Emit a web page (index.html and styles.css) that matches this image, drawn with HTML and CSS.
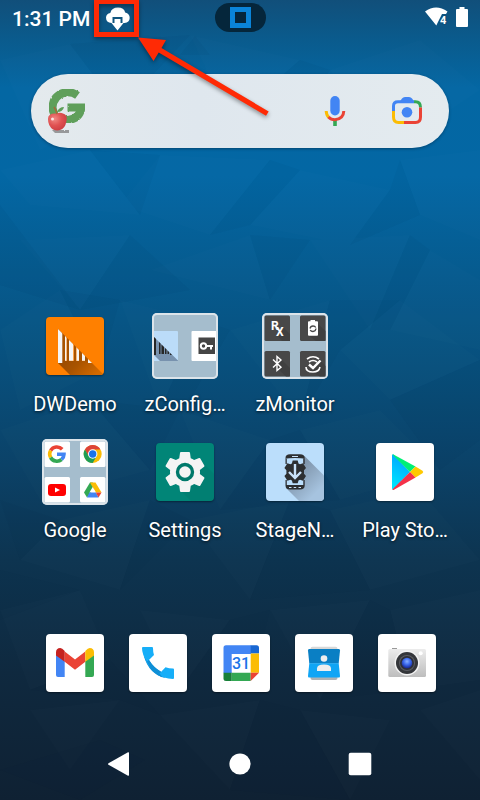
FILE: index.html
```html
<!DOCTYPE html>
<html lang="en">
<head>
<meta charset="utf-8">
<meta name="viewport" content="width=device-width, initial-scale=1">
<title>Home screen</title>
<link rel="stylesheet" href="styles.css">
</head>
<body>
<svg class="wallpaper" viewBox="0 0 480 800" preserveAspectRatio="none" aria-hidden="true">
  <g fill="#fff" fill-opacity=".01">
    <path d="M0 60L70 44L120 110L40 150ZM190 35L300 60L230 120ZM330 70L420 40L480 90L390 150ZM0 170L90 150L140 215L30 205ZM160 155L270 160L210 235L120 205ZM300 170L390 190L350 245L250 225ZM400 160L480 150V240L420 215ZM20 240L130 235L80 310ZM150 270L250 235L270 300ZM310 240L410 235L370 330ZM430 250L480 280V350L390 330Z"/>
    <path d="M0 330L60 290L100 370L20 410ZM120 300L200 320L160 410ZM230 330L330 300L300 420ZM340 350L400 300L480 360L390 400ZM0 430L90 400L150 470L40 500ZM180 410L270 440L220 510ZM300 430L380 410L440 470L340 500ZM60 520L150 500L120 590L20 560ZM190 520L290 500L250 600ZM330 510L420 490L480 560L370 590Z"/>
    <path d="M0 610L80 590L110 660L30 690ZM140 610L230 620L180 690ZM270 610L370 600L320 700ZM390 610L480 590V680L410 690ZM30 710L120 700L70 770ZM160 715L260 700L230 790ZM300 710L390 720L350 800ZM420 710L480 690V780Z"/>
  </g>
  <g fill="#001c38" fill-opacity=".035">
    <path d="M70 44L190 35L120 110ZM180 55L195 36L210 55ZM300 60L330 70L290 140L230 120ZM90 150L160 155L140 215ZM270 160L300 170L250 225L210 235ZM390 190L400 160L420 215L350 245ZM0 205L80 310L0 285ZM130 235L190 290L80 310ZM250 235L310 240L270 300ZM410 235L430 250L390 330L370 330Z"/>
    <path d="M60 290L120 300L100 370ZM200 320L230 330L190 400L160 410ZM330 300L400 300L340 350L300 420ZM390 400L480 360V440L440 470ZM90 400L180 410L150 470ZM270 440L300 430L340 500L220 510ZM0 500L60 520L20 560ZM150 500L190 520L120 590ZM290 500L330 510L370 590L250 600ZM0 570L80 590L0 620ZM230 620L270 610L250 690L180 690ZM370 600L390 610L410 690L320 700ZM110 660L160 715L120 700L30 690ZM260 700L300 710L350 800L230 790ZM100 740L145 760L80 800L0 770Z"/>
  </g>
</svg>

<header class="status">
  <div class="status-left">
    <time class="clock">1:31 PM</time>
    <svg class="icon-cloud" viewBox="0 0 24 24" role="img" aria-label="Download pending">
      <path fill="#fff" d="M5.500 16Q0 15.500 0 10.500Q.3 6.500 4.300 6Q5.500 .5 12 .5Q18 .5 19.200 5.500Q23.700 6.500 23.700 11Q23.500 15.500 18.500 16Z"/>
      <path fill="#10557f" d="M6.500 16.500V10H16.500V16.500Z"/>
      <path fill="#fff" d="M8.500 12H14.500V16H17.500L11.500 23.500L5.500 16H8.500Z"/>
    </svg>
  </div>
  <div class="pill"><span class="pill-mark"></span></div>
  <div class="status-right">
    <svg class="icon-wifi" viewBox="0 0 23 20" role="img" aria-label="Wi-Fi">
      <path fill="#fff" d="M0 4.500Q11 -3.500 22.500 4.500L21 7H17L13 15L11.300 18.500Z"/>
      <text class="wifi-band" x="15" y="17">4</text>
    </svg>
    <svg class="icon-battery" viewBox="0 0 12 20" role="img" aria-label="Battery">
      <path fill="#fff" d="M3.500 0H8.500V2H11Q12 2 12 3V19Q12 20 11 20H1Q0 20 0 19V3Q0 2 1 2H3.500Z"/>
    </svg>
  </div>
</header>

<main>
  <form class="search" role="search">
    <svg class="doodle" viewBox="0 0 42 48" aria-hidden="true">
      <defs>
        <filter id="rough" x="-10%" y="-10%" width="120%" height="120%">
          <feTurbulence type="fractalNoise" baseFrequency=".7" numOctaves="2" seed="4"/>
          <feDisplacementMap in="SourceGraphic" scale="2" xChannelSelector="R" yChannelSelector="G"/>
        </filter>
        <radialGradient id="apple" cx=".35" cy=".35" r=".75"><stop offset="0" stop-color="#f08a84"/><stop offset=".5" stop-color="#e05252"/><stop offset="1" stop-color="#c93b40"/></radialGradient>
      </defs>
      <path filter="url(#rough)" fill="none" stroke="#5e9f5a" stroke-width="8" d="M30.500 8.500Q25 4.500 18 5.500Q6 8.500 5.500 20.500Q6.500 33 21 33Q32.500 32 34.500 20.500H20.500"/>
      <g filter="url(#rough)" fill="#777" opacity=".7"><path d="M5 43H22V46H8Z"/></g>
      <path fill="url(#apple)" d="M9 26.500Q13 25 16 26.500Q21 28 19.500 34Q18 42 13 43Q10 44 6 42.500Q1 39 1 32Q1 26 9 26.500Z"/>
      <path fill="none" stroke="#a66a3a" stroke-width="1.500" d="M10 27Q9 23 7 20"/>
      <path fill="#5e9f5a" d="M10 25Q12 20 17 20Q16 25 10 25Z"/>
      <circle cx="5.500" cy="32" r="1.500" fill="#fff" opacity=".8"/>
    </svg>
    <input class="search-input" type="search" aria-label="Search">
    <button class="search-button" type="button" aria-label="Voice search">
      <svg viewBox="0 0 32 32">
        <rect x="11.300" y="1" width="9.400" height="19.500" rx="4.700" fill="#4285f4"/>
        <path fill="#34a853" d="M14.200 24h3.600v7h-3.600z"/>
        <g fill="none" stroke-width="3">
          <path stroke="#fbbc04" d="M7.200 16Q7.300 20 9.800 22.300"/>
          <path stroke="#ea4335" d="M9.500 22Q12 24.700 16 24.700Q24.500 24 24.800 16"/>
        </g>
      </svg>
    </button>
    <button class="search-button" type="button" aria-label="Search with camera">
      <svg viewBox="0 0 32 32">
        <g fill="none" stroke-width="3">
          <path stroke="#4285f4" d="M2.500 17V11Q2.500 6.800 7 6.800H23"/>
          <path stroke="#34a853" d="M23 6.800H24.500Q29.500 6.800 29.500 12.500"/>
          <path stroke="#ea4335" d="M29.500 12.500V22Q29.500 27.500 24.500 27.500H13"/>
          <path stroke="#fbbc04" d="M2.500 16V22Q2.500 27.500 7.500 27.500H13"/>
        </g>
        <path fill="#4285f4" d="M8.500 7L11 3.500Q12 2 14 2H18Q20 2 21 3.500L23.500 7Z"/>
        <circle cx="16" cy="17.200" r="5.300" fill="#4285f4"/>
      </svg>
    </button>
  </form>

  <nav class="apps" aria-label="Apps">
    <a class="app" href="#dwdemo">
      <span class="slot"><svg class="tile tile-orange" viewBox="0 0 58 58" aria-hidden="true">
        <defs><linearGradient id="dw" x1="12" y1="30" x2="46" y2="62" gradientUnits="userSpaceOnUse"><stop offset="0" stop-color="#8f4500"/><stop offset=".55" stop-color="#a85300"/><stop offset="1" stop-color="#d36a00"/></linearGradient>
        <clipPath id="dwc"><path d="M12 12L46 46H12Z"/></clipPath></defs>
        <path fill="url(#dw)" d="M12 12L58 58H24L12 46Z"/>
        <g clip-path="url(#dwc)"><path fill="#ff8000" d="M16 12H46V44H16Z"/><path fill="#a85300" d="M16 12h3v32h-3zM21 12h2v32h-2zM28 12h2v32h-2zM33 12h3v32h-3zM39 12h3v32h-3z"/>
        <path fill="#f5f5f5" d="M12 12h4.300v34.300H12zM19 12h1.500v31.700H19zM23 12h4.300v31.700H23zM30.500 12h2.500v31.700h-2.500zM36 12h3v31.700h-3zM42 12h4v34h-4z"/></g>
      </svg></span>
      <span class="label">DWDemo</span>
    </a>
    <a class="app" href="#zconfigure">
      <span class="slot"><svg class="folder" viewBox="0 0 66 66" aria-hidden="true">
        <path fill="#bbdcf9" d="M2 18H25Q26 18 26 19V47Q26 48 25 48H2Z"/>
        <path fill="#7892ae" d="M2 24L26 47.500V48H8L2 42Z"/>
        <path fill="#262626" d="M2 24L4 26V42H2ZM7 29l1.500 1.500V41H7zM9.500 31.500l2.500 2.500v7H9.500zM13 35l1.500 1.500V41H13zM15.500 37.500l1.500 1.500v2h-1.500zM18 40l2 2h-2z"/>
        <path fill="#fff" d="M64 18H40.500Q39.500 18 39.500 19V47Q39.500 48 40.500 48H64Z"/>
        <path fill="#454545" d="M46.500 24.500H63V41H46.500Z"/>
        <circle cx="51.500" cy="33" r="2.700" fill="none" stroke="#fff" stroke-width="2"/>
        <path fill="#fff" d="M54 32h7v2h-1v2.500h-2V34h-4z"/>
      </svg></span>
      <span class="label">zConfig…</span>
    </a>
    <a class="app" href="#zmonitor">
      <span class="slot"><svg class="folder" viewBox="0 0 66 66" aria-hidden="true">
        <g fill="#484848"><rect x="2.500" y="2.500" width="25.500" height="25.500" rx="1.500"/><rect x="38" y="2.500" width="25.500" height="25.500" rx="1.500"/><rect x="2.500" y="38" width="25.500" height="25.500" rx="1.500"/><rect x="38" y="38" width="25.500" height="25.500" rx="1.500"/></g>
        <g fill="#404040"><path d="M21 14L28 21V28H20L15 22ZM55 10L63.500 18V28H54L46 22ZM19 46L28 55V63.500H24L14 54ZM57 46L63.500 53V63.500H58L48 58Z"/></g>
        <text class="rx" x="9" y="17">R<tspan x="14" dy="6">X</tspan></text>
        <path fill="#fff" d="M46 9Q46 8.300 47 8.300H48.500V7H53V8.300H55Q56 8.300 56 9V22Q56 22.700 55 22.700H47Q46 22.700 46 22Z"/>
        <path fill="none" stroke="#484848" stroke-width="1.300" d="M48 15.500Q48.500 13 51 13Q53 13 53.800 14.500M54 15.500Q53.500 18.500 51 18.500Q49 18.500 48.200 17"/>
        <path fill="none" stroke="#fff" stroke-width="1.400" d="M11 46.500L19 54.200L15 57.500V43.500L19 47L11 54.500"/>
        <g fill="none" stroke="#fff" stroke-width="1.600"><path d="M45 46Q51 41.500 57 46M47 49Q51 46 55 49M44 54Q44 59 51 59Q57 59 58 54"/><path stroke-width="2.400" d="M47 51.500L51 55L58.500 47.500"/></g>
      </svg></span>
      <span class="label">zMonitor</span>
    </a>
    <a class="app app-row-start" href="#google">
      <span class="slot"><svg class="folder" viewBox="0 0 66 66" aria-hidden="true">
        <g fill="#fff"><rect x="2.500" y="2.500" width="25.500" height="25.500" rx="1.500"/><rect x="38" y="2.500" width="25.500" height="25.500" rx="1.500"/><rect x="2.500" y="38" width="25.500" height="25.500" rx="1.500"/><rect x="38" y="38" width="25.500" height="25.500" rx="1.500"/></g>
        <g fill="none" stroke-width="3.600">
          <path stroke="#ea4335" d="M20.200 10.300A7.300 7.300 0 0 0 8.600 11.500"/>
          <path stroke="#fbbc05" d="M8.600 11.500A7.300 7.300 0 0 0 8.600 18.500"/>
          <path stroke="#34a853" d="M8.600 18.500A7.300 7.300 0 0 0 19.600 20.500"/>
          <path stroke="#4285f4" d="M19.600 20.500A7.300 7.300 0 0 0 22 15.200H15"/>
        </g>
        <circle cx="50.700" cy="15" r="9" fill="#fbbc05"/>
        <path fill="#dd4337" d="M42.900 10.500A9 9 0 0 1 58.500 10.500H50.700L46.800 17.200Z"/>
        <path fill="#1e9d55" d="M42.900 10.500A9 9 0 0 0 50.700 24L54.600 17.200H46.800Z"/>
        <circle cx="50.700" cy="15" r="4.700" fill="#fff"/><circle cx="50.700" cy="15" r="3.700" fill="#1a73e8"/>
        <rect x="6" y="45" width="18" height="12" rx="3" fill="#f00"/><path fill="#fff" d="M13 48.500L18 51L13 53.500Z"/>
        <path fill="#34a853" d="M48 43.500H50.700L53.500 48L45 58.500L42 53.500Z"/>
        <path fill="#fbbc04" d="M48 43.500H53.500L59.500 53.500H53.500Z"/>
        <path fill="#fff" d="M50.700 48L54 53.500H47.400Z"/>
        <path fill="#4285f4" d="M47.400 53.500H54L56.500 58.500H45Z"/><path fill="#ea4335" d="M53.800 53.500H59.500L56.500 58.500Z"/>
      </svg></span>
      <span class="label">Google</span>
    </a>
    <a class="app" href="#settings">
      <span class="slot"><svg class="tile tile-teal" viewBox="0 0 58 58" aria-hidden="true">
        <path fill="#027568" d="M43 16L58 31V58H35L24 47Z" opacity=".3"/>
        <g transform="translate(5 5) scale(2)"><path fill="#f4f4f4" d="M19.430 12.980c.04-.32.07-.64.07-.98s-.03-.66-.07-.98l2.110-1.650c.19-.15.24-.42.12-.64l-2-3.460c-.12-.22-.39-.3-.61-.22l-2.490 1c-.52-.4-1.080-.73-1.690-.98l-.38-2.650C14.460 2.180 14.250 2 14 2h-4c-.25 0-.46.18-.49.42l-.38 2.650c-.61.25-1.170.59-1.690.98l-2.490-1c-.23-.09-.49 0-.61.22l-2 3.460c-.13.22-.07.49.12.64l2.110 1.650c-.04.32-.07.65-.07.98s.03.66.07.98l-2.110 1.650c-.19.15-.24.42-.12.64l2 3.460c.12.22.39.3.61.22l2.490-1c.52.4 1.080.73 1.690.98l.38 2.650c.03.24.24.42.49.42h4c.25 0 .46-.18.49-.42l.38-2.650c.61-.25 1.170-.59 1.690-.98l2.490 1c.23.09.49 0 .61-.22l2-3.460c.12-.22.07-.49-.12-.64l-2.110-1.650z"/></g>
        <circle cx="29" cy="29" r="7.500" fill="#f4f4f4" stroke="#00796b" stroke-width="3.400"/>
      </svg></span>
      <span class="label">Settings</span>
    </a>
    <a class="app" href="#stagenow">
      <span class="slot"><svg class="tile tile-sky" viewBox="0 0 58 58" aria-hidden="true">
        <defs><linearGradient id="sn" x1="29" y1="29" x2="50" y2="50" gradientUnits="userSpaceOnUse"><stop offset="0" stop-color="#7f95ab"/><stop offset="1" stop-color="#a6c3df"/></linearGradient></defs>
        <path fill="url(#sn)" d="M38.500 13L58 32.500V58H33L20 45Z"/>
        <path fill="#bbdefb" d="M21 15H37V43H21Z"/>
        <g fill="#2d2f31">
          <path d="M19.500 16V15Q19.500 11.300 24 11.300H34Q38.700 11.300 38.700 15V16Q36 15 29 15Q22 15 19.500 16ZM19.500 42V42.500Q19.500 46.500 24 46.500H34Q38.700 46.500 38.700 42.500V42Z"/>
          <path d="M19.500 16h1.300v5h-1.300zM37.400 16h1.300v5h-1.300zM19.500 37h1.300v5h-1.300zM37.400 37h1.300v5h-1.300z"/>
          <path d="M26.700 17.500h5l.8 3 1.500.8 3-1 3 4.700-2 2.200v3.600l2 2.200-3 4.700-3-1-1.500.8-.8 2.700h-5l-.8-2.700-1.500-.8-3 1-3-4.700 2-2.200v-3.600l-2-2.200 3-4.700 3 1 1.500-.8z"/>
        </g>
        <path fill="none" stroke="#c9e2f9" stroke-width="2.400" d="M29 21V35M23 29L29 35L35 29"/>
        <path stroke="#c9e2f9" stroke-width="1.200" d="M26 13.500H32M23 44.500h2.500M27.700 44.500h2.500M32.500 44.500h2.500"/>
      </svg></span>
      <span class="label">StageN…</span>
    </a>
    <a class="app" href="#play">
      <span class="slot"><svg class="tile" viewBox="0 0 58 58" aria-hidden="true">
        <defs><linearGradient id="pl" x1="30" y1="12" x2="14" y2="40" gradientUnits="userSpaceOnUse"><stop offset="0" stop-color="#00a0ff"/><stop offset="1" stop-color="#00e2ff"/></linearGradient></defs>
        <path fill="url(#pl)" d="M16 12.500Q16 11 17.500 11.500L34 29L17 46.700Q16 46.500 16 45Z"/>
        <path fill="#00f076" d="M17 11.200L39.500 23.500L34 29L16.300 11.500Z"/>
        <path fill="#ffc900" d="M39.500 23.500L46.500 27.800Q48 29 46.500 30.200L39.500 34.500L34 29Z"/>
        <path fill="#f43249" d="M34 29L39.500 34.500L18 46.800Q17 47.300 16.300 46.500Z"/>
      </svg></span>
      <span class="label">Play Sto…</span>
    </a>
  </nav>
</main>

<nav class="dock" aria-label="Favourites">
  <a href="#gmail" aria-label="Gmail"><svg class="tile" viewBox="0 0 58 58">
    <path fill="#4285f4" d="M10 20L18.700 27V43H12Q10 43 10 41Z"/>
    <path fill="#34a853" d="M48 20L39.300 27V43H46Q48 43 48 41Z"/>
    <path fill="#ea4335" d="M18.700 17.500L29 25.500L39.300 17.500V27.700L29 35.700L18.700 27.700Z"/>
    <path fill="#c5221f" d="M10 18.500Q10 14 14.300 14Q16 14 18.700 17V27.700L10 21.500Z"/>
    <path fill="#fbbc04" d="M48 18.500Q48 14 43.700 14Q42 14 39.300 17V27.700L48 21.500Z"/>
  </svg></a>
  <a href="#phone" aria-label="Phone"><svg class="tile" viewBox="0 0 58 58">
    <path fill="#0f8fd6" d="M14.800 22L20 26Q24.500 33.500 32 37.800L36 44Q20 40 14.800 22Z"/>
    <path fill="#16aef8" d="M14 13H23Q24 13 24 14Q24 18 25 21L18.200 27.800Q13 21 13 14Q13 13 14 13Z"/>
    <path fill="#16aef8" d="M31 39L36.500 33.300Q40 34.500 44 34.500Q45 34.500 45 35.500V44Q45 45 44 45Q25 44.500 16 25L18.200 27.800Q23 35 31 39Z"/>
    <path fill="#0f8fd6" d="M18.200 27.800L20 26Q24.500 33.500 32 37.800L30.500 39.300L33.500 43.500Q22 39 18.200 27.800Z"/>
  </svg></a>
  <a href="#calendar" aria-label="Calendar"><svg class="tile" viewBox="0 0 58 58">
    <path fill="#4285f4" d="M11.500 14Q11.500 11.300 14 11.300H39V20H19.700V39H11.500Z"/>
    <path fill="#1967d2" d="M38.700 11.300H44.500Q47 11.300 47 14V19.500H38.700Z"/>
    <path fill="#fbbc04" d="M38.700 19.500H47V38.700H38.700Z"/>
    <path fill="#34a853" d="M19.700 38.700H38.700V47H19.700Z"/>
    <path fill="#188038" d="M11.500 38.700H19.700V47H14Q11.500 47 11.500 44.500Z"/>
    <path fill="#ea4335" d="M38.700 38.700H47L38.700 47Z"/>
    <text class="day" x="29" y="35">31</text>
  </svg></a>
  <a href="#contacts" aria-label="Contacts"><svg class="tile" viewBox="0 0 58 58">
    <rect x="15.500" y="12.700" width="27" height="6" rx="2" fill="#d8d8d8"/><rect x="15.500" y="38" width="27" height="8" rx="2" fill="#aeb2b5"/>
    <path fill="#0a7fc4" d="M14 15H44Q45 15 45 16.500L43.700 29.500H14.300L13 16.500Q13 15 14 15Z"/>
    <path fill="#10a5f5" d="M14.300 29.300H43.700L45 42Q45 43.500 44 43.500H14Q13 43.500 13 42Z"/>
    <circle cx="29" cy="24.500" r="3.300" fill="#eee"/><path fill="#eee" d="M22 37V34.500Q22 30.500 29 30.500Q36 30.500 36 34.500V37Z"/>
  </svg></a>
  <a href="#camera" aria-label="Camera"><svg class="tile" viewBox="0 0 58 58">
    <defs><linearGradient id="cm" x1="0" y1="0" x2="0" y2="1"><stop offset="0" stop-color="#ececec"/><stop offset="1" stop-color="#bdbdbd"/></linearGradient>
    <radialGradient id="ln" cx=".5" cy=".35" r=".6"><stop offset="0" stop-color="#8ab0ff"/><stop offset=".5" stop-color="#3f6df0"/><stop offset="1" stop-color="#1b2fa0"/></radialGradient></defs>
    <path fill="#999" d="M14 14h5v2h-5z"/>
    <rect x="10.300" y="15" width="37.700" height="28" rx="1.500" fill="url(#cm)"/>
    <circle cx="42.700" cy="19.300" r="2" fill="#fff"/>
    <circle cx="29" cy="29" r="12.500" fill="#f3f3f3"/><circle cx="29" cy="29" r="11" fill="#34363a"/><circle cx="29" cy="29" r="8" fill="#5c5e64"/><circle cx="29" cy="29" r="7" fill="#2e3038"/><circle cx="29" cy="29" r="5.300" fill="url(#ln)"/>
  </svg></a>
</nav>

<footer class="navbar">
  <button type="button" aria-label="Back"><svg viewBox="0 0 24 24"><path fill="#fff" d="M0.500 11.200L20 .3Q21 0 21 1V23Q21 24 20 23.700L.5 12.800Q-.5 12 .5 11.200Z"/></svg></button>
  <button type="button" aria-label="Home"><svg viewBox="0 0 24 24"><circle cx="12" cy="12" r="10.600" fill="#fff"/></svg></button>
  <button type="button" aria-label="Overview"><svg viewBox="0 0 24 24"><rect x=".7" y=".7" width="22.600" height="22.600" rx="2" fill="#fff"/></svg></button>
</footer>

<svg class="callout" viewBox="0 0 280 130" aria-hidden="true">
  <rect x="96.500" y="1.500" width="40" height="33" fill="none" stroke="#ff2a05" stroke-width="5"/>
  <path fill="#ff2a05" d="M138 37.500L166 40L161.500 48L268.700 111.500L266 115.800L158.700 52.500L153.500 61Z"/>
</svg>
</body>
</html>
```
FILE: styles.css
```css
* {
  box-sizing: border-box;
}

body {
  position: relative;
  display: flex;
  flex-direction: column;
  min-height: 100vh;
  margin: 0;
  overflow-x: hidden;
  color: #fff;
  font-family: Roboto, "Liberation Sans", sans-serif;
  font-size: 20px;
  line-height: 26px;
  background: linear-gradient(#114f7a 0%, #0a5b8d 5%, #0467a3 11%, #0367a4 22%, #065b8f 34%, #084f7c 46%, #0b4268 58%, #0d3450 70%, #0f293f 84%, #0f2133 100%);
}

svg {
  display: block;
}

.wallpaper {
  position: absolute;
  inset: 0;
  z-index: -1;
  width: 100%;
  height: 100%;
}

.status {
  display: grid;
  grid-template-columns: 1fr auto 1fr;
  align-items: center;
  height: 34px;
  padding: 0 12px;
}

.status-left,
.status-right {
  display: flex;
  align-items: center;
}

.status-left {
  gap: 16px;
  padding-top: 3px;
}

.status-right {
  justify-content: flex-end;
  gap: 8px;
}

.clock {
  font-size: 21px;
  font-weight: 500;
}

.icon-cloud {
  width: 24px;
  height: 24px;
}

.icon-wifi {
  width: 23px;
  height: 20px;
}

.wifi-band {
  fill: #fff;
  stroke: #10507b;
  stroke-width: 2px;
  paint-order: stroke;
  font-size: 11px;
  font-weight: 700;
}

.icon-battery {
  width: 12px;
  height: 20px;
}

.pill {
  display: flex;
  align-items: center;
  justify-content: center;
  width: 51px;
  height: 29px;
  border-radius: 15px;
  background: #05263b;
}

.pill-mark {
  width: 21px;
  height: 21px;
  border: 5px solid #0a84d8;
}

.search {
  display: flex;
  align-items: center;
  gap: 24px;
  height: 74px;
  margin: 40px 31px 0;
  padding: 0 18px 0 16px;
  border-radius: 37px;
  background: linear-gradient(90deg, #e4eaed, #dfe7ee 40%, #e4ebef);
  box-shadow: 0 1px 3px rgba(0, 20, 40, 0.4);
}

.doodle {
  flex: none;
  width: 42px;
  height: 48px;
}

.search-input {
  flex: 1;
  min-width: 0;
  height: 48px;
  padding: 0;
  border: 0;
  outline: 0;
  color: #333;
  font: inherit;
  background: none;
}

.search-button {
  display: grid;
  place-items: center;
  width: 48px;
  height: 48px;
  padding: 0;
  border: 0;
  background: none;
}

.search-button svg {
  width: 32px;
  height: 32px;
}

.apps {
  display: grid;
  grid-template-columns: repeat(4, 1fr);
  row-gap: 22px;
  padding: 165px 20px 0;
}

.app {
  display: flex;
  flex-direction: column;
  align-items: center;
  gap: 12px;
  color: inherit;
  text-decoration: none;
}

.app-row-start {
  grid-column: 1;
}

.slot {
  display: grid;
  place-items: center;
  height: 66px;
}

.label {
  white-space: nowrap;
  text-shadow: 0 1px 3px rgba(0, 0, 0, 0.7);
}

.tile {
  width: 58px;
  height: 58px;
  border-radius: 4px;
  background: #fff;
  box-shadow: 0 1px 2px rgba(0, 0, 0, 0.4);
}

.tile-orange {
  background: #ff8000;
}

.tile-teal {
  background: #018577;
}

.tile-sky {
  background: #bbdefb;
}

.folder {
  width: 66px;
  height: 66px;
  border-radius: 5px;
  background: #a5bdcd;
  box-shadow: inset 0 0 0 2px #dce4ea;
}

.rx {
  fill: #fff;
  font-size: 12px;
  font-weight: 700;
}

.day {
  fill: #1a73e8;
  font-size: 16px;
  font-weight: 500;
  text-anchor: middle;
}

.dock {
  display: grid;
  grid-template-columns: repeat(5, 1fr);
  justify-items: center;
  margin-top: auto;
  padding: 0 32px 0 34px;
}

.navbar {
  display: grid;
  grid-template-columns: repeat(3, 1fr);
  justify-items: center;
  padding: 48px 60px 12px;
}

.navbar button {
  padding: 12px;
  border: 0;
  background: none;
}

.navbar svg {
  width: 24px;
  height: 24px;
}

.callout {
  position: absolute;
  top: 0;
  left: 0;
  width: 280px;
  height: 130px;
  pointer-events: none;
  filter: drop-shadow(0 2px 2px rgba(0, 0, 0, 0.4));
}
```
